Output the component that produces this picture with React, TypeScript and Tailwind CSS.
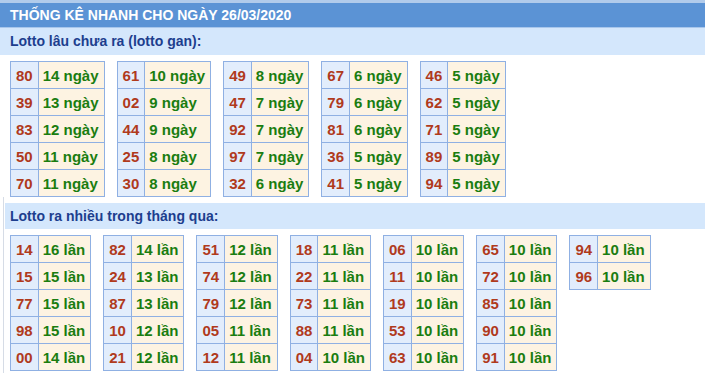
type Row = [string, string];

const gan: Row[][] = [
  [['80', '14'], ['39', '13'], ['83', '12'], ['50', '11'], ['70', '11']],
  [['61', '10'], ['02', '9'], ['44', '9'], ['25', '8'], ['30', '8']],
  [['49', '8'], ['47', '7'], ['92', '7'], ['97', '7'], ['32', '6']],
  [['67', '6'], ['79', '6'], ['81', '6'], ['36', '5'], ['41', '5']],
  [['46', '5'], ['62', '5'], ['71', '5'], ['89', '5'], ['94', '5']],
];

const nhieu: Row[][] = [
  [['14', '16'], ['15', '15'], ['77', '15'], ['98', '15'], ['00', '14']],
  [['82', '14'], ['24', '13'], ['87', '13'], ['10', '12'], ['21', '12']],
  [['51', '12'], ['74', '12'], ['79', '12'], ['05', '11'], ['12', '11']],
  [['18', '11'], ['22', '11'], ['73', '11'], ['88', '11'], ['04', '10']],
  [['06', '10'], ['11', '10'], ['19', '10'], ['53', '10'], ['63', '10']],
  [['65', '10'], ['72', '10'], ['85', '10'], ['90', '10'], ['91', '10']],
  [['94', '10'], ['96', '10']],
];

function StatTable({ rows, unit }: { rows: Row[]; unit: string }) {
  return (
    <table className="border-collapse text-[15px] font-bold leading-none">
      <tbody>
        {rows.map(([num, count]) => (
          <tr key={num}>
            <td className="h-[27px] border border-[#8fb0e3] bg-[#e2edfc] px-[5px] text-center text-[#b03a1c]">
              {num}
            </td>
            <td className="h-[27px] border border-[#8fb0e3] bg-[#fdf3e2] pl-[4px] pr-[5px] text-[#1a7d10]">
              {count} {unit}
            </td>
          </tr>
        ))}
      </tbody>
    </table>
  );
}

export default function App() {
  return (
    <div className="w-[705px] h-[388px] bg-white font-['Liberation_Sans',Arial,sans-serif]">
      <div className="h-[3px] bg-[#b1cbeb]" />
      <div className="flex h-[24px] items-center bg-[#5b93d5] pl-[10px] text-[14px] font-bold text-white">
        THỐNG KÊ NHANH CHO NGÀY 26/03/2020
      </div>
      <div className="h-px bg-[#a9c7ec]" />
      <div className="flex h-[27px] items-center bg-[#d4e7fc] pl-[10px] text-[14px] font-bold text-[#1d3e8e]">
        Lotto lâu chưa ra (lotto gan):
      </div>

      <div className="flex items-start gap-[12px] pl-[10px] pt-[6px]">
        {gan.map((rows, i) => (
          <StatTable key={i} rows={rows} unit="ngày" />
        ))}
      </div>

      <div className="ml-[3px] border-l border-[#d6dce6] pt-[6px] pb-[2px]">
        <div className="ml-px flex h-[26px] items-center bg-[#d4e7fc] pl-[5px] text-[14px] font-bold text-[#1d3e8e]">
          Lotto ra nhiều trong tháng qua:
        </div>
        <div className="flex items-start gap-[12px] pl-[6px] pt-[6px]">
          {nhieu.map((rows, i) => (
            <StatTable key={i} rows={rows} unit="lần" />
          ))}
        </div>
      </div>
    </div>
  );
}
